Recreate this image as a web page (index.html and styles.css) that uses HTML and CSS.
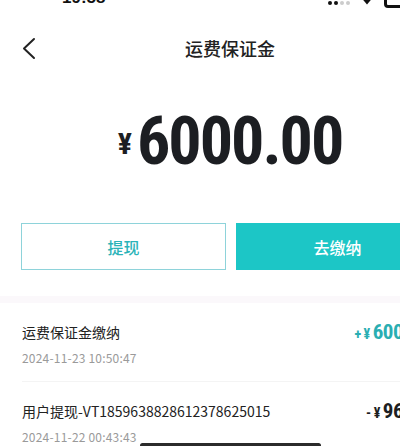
FILE: index.html
```html
<!DOCTYPE html>
<html lang="zh-CN">
<head>
  <meta charset="UTF-8">
  <title>运费保证金</title>
  <link rel="stylesheet" href="styles.css">
</head>
<body>
  <div class="page">
    <div class="status-bar">
      <span class="time">19:58</span>
      <div class="status-icons">
        <span class="signal">
          <i class="on"></i><i class="on"></i><i></i><i></i>
        </span>
        <svg class="wifi" width="12" height="10" viewBox="0 0 12 10">
          <path d="M0.5 3 Q6 -2 11.5 3 L6 9.5 Z" fill="#111"/>
        </svg>
        <span class="battery"></span>
      </div>
    </div>

    <div class="nav">
      <svg class="back" width="16" height="24" viewBox="0 0 16 24">
        <polyline points="13,2 3,11.5 13,21" fill="none" stroke="#222" stroke-width="2" stroke-linecap="round" stroke-linejoin="round"/>
      </svg>
      <h1 class="title">运费保证金</h1>
    </div>

    <div class="balance">
      <span class="currency">¥</span><span class="amount">6000.00</span>
    </div>

    <div class="actions">
      <button class="btn btn-outline">提现</button>
      <button class="btn btn-fill">去缴纳</button>
    </div>

    <div class="divider"></div>

    <ul class="records">
      <li class="record">
        <div class="record-info">
          <div class="record-name">运费保证金缴纳</div>
          <div class="record-time">2024-11-23 10:50:47</div>
        </div>
        <div class="record-money income"><small>+</small><small>¥</small>6000.00</div>
      </li>
      <li class="record">
        <div class="record-info">
          <div class="record-name">用户提现-VT1859638828612378625015</div>
          <div class="record-time">2024-11-22 00:43:43</div>
        </div>
        <div class="record-money"><small>-</small><small>¥</small>960.00</div>
      </li>
    </ul>
  </div>

  <div class="home-indicator"></div>
</body>
</html>
```

FILE: styles.css
```css
:root {
  --teal: #1cc6c6;
  --teal-text: #2bb3b8;
  --teal-border: #8ed3da;
  --text: #222;
  --muted: #9a9a9a;
  --num-font: "Liberation Sans Narrow", "Roboto Condensed", "Liberation Sans", sans-serif;
}

html {
  overflow: hidden;
}

body {
  margin: 0;
  background: #fff;
  color: var(--text);
  font-family: "Noto Sans CJK SC", "Noto Sans", sans-serif;
}

.page {
  width: 460px;
}

.status-bar {
  height: 18px;
  margin-top: -12px;
  display: flex;
  justify-content: space-between;
  align-items: flex-end;
  padding: 0 50px 0 62px;
}

.time {
  font-family: "Liberation Sans", sans-serif;
  font-weight: 600;
  font-size: 17px;
  line-height: 16px;
  color: #111;
}

.status-icons {
  display: flex;
  align-items: flex-end;
  gap: 11px;
}

.signal {
  display: flex;
  gap: 2px;
  margin-bottom: 1px;
}

.signal i {
  width: 4px;
  height: 4px;
  border-radius: 50%;
  background: #ccc;
}

.signal i.on {
  background: #111;
}

.wifi {
  margin-bottom: 1px;
}

.battery {
  width: 26px;
  height: 13px;
  margin-bottom: -2px;
  border-radius: 4px;
  border: 3px solid #111;
  box-sizing: border-box;
}

.nav {
  height: 48px;
  margin-top: 18px;
  display: flex;
  align-items: center;
  justify-content: center;
  position: relative;
}

.back {
  position: absolute;
  left: 21px;
  top: 13px;
}

.title {
  margin: 0;
  font-size: 18px;
  font-weight: 500;
  color: var(--text);
}

.balance {
  display: flex;
  justify-content: center;
  align-items: baseline;
  gap: 5px;
  margin-top: 37px;
  color: #1c1e22;
  font-family: var(--num-font);
  font-weight: 700;
  line-height: 1;
}

.currency {
  font-size: 30px;
  position: relative;
  top: -10px;
}

.amount {
  font-size: 66px;
  letter-spacing: -2px;
}

.actions {
  display: flex;
  gap: 10px;
  padding: 0 21px;
  margin-top: 48px;
}

.btn {
  flex: 1;
  height: 47px;
  font-family: inherit;
  font-size: 16px;
  font-weight: 500;
  border-radius: 0;
  cursor: pointer;
}

.btn-outline {
  background: #fff;
  color: var(--teal-text);
  border: 1px solid var(--teal-border);
}

.btn-fill {
  background: var(--teal);
  color: #fff;
  border: none;
}

.divider {
  height: 7px;
  margin-top: 26px;
  background: #fbf8fb;
}

.records {
  list-style: none;
  margin: 0;
  padding: 0 21px 0 22px;
}

.record {
  display: flex;
  justify-content: space-between;
  align-items: flex-start;
  padding: 19px 0 14px;
  border-bottom: 1px solid #f4f4f4;
}

.record-name {
  font-size: 14px;
  line-height: 20px;
  color: var(--text);
}

.record-time {
  margin-top: 7px;
  font-size: 12px;
  line-height: 18px;
  letter-spacing: 0.2px;
  color: var(--muted);
}

.record-money {
  font-family: var(--num-font);
  font-weight: 700;
  font-size: 21px;
  line-height: 20px;
  letter-spacing: -0.5px;
  color: #1c1e22;
}

.record-money small {
  font-size: 14px;
  margin-right: 3px;
}

.record-money.income {
  color: #2aaeb2;
}

.home-indicator {
  position: fixed;
  left: 140px;
  bottom: -2px;
  width: 181px;
  height: 5px;
  border-radius: 3px;
  background: #2b2b2b;
}
```
